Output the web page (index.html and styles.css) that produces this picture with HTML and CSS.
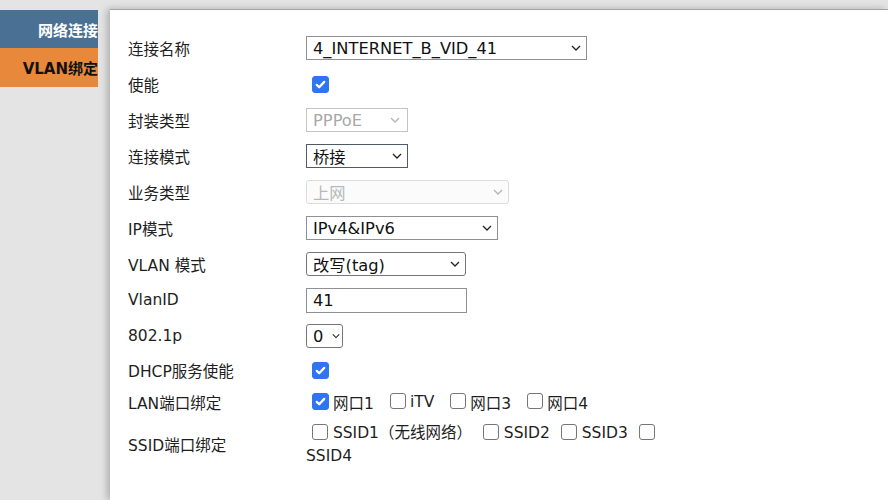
FILE: index.html
```html
<!DOCTYPE html>
<html lang="zh-CN">
<head>
<meta charset="utf-8">
<title>VLAN绑定</title>
<link rel="stylesheet" href="styles.css">
</head>
<body>
<div class="page">
  <nav class="side">
    <div class="side-item net">网络连接</div>
    <div class="side-item vlan">VLAN绑定</div>
  </nav>
  <main class="panel">
    <div class="form">
      <div class="row">
        <div class="lbl">连接名称</div>
        <div class="val"><div class="sel w-name">4_INTERNET_B_VID_41<svg class="chev" viewBox="0 0 10 6"><path d="M1 1l4 4 4-4"/></svg></div></div>
      </div>
      <div class="row">
        <div class="lbl">使能</div>
        <div class="val"><span class="cb on"><svg viewBox="0 0 16 16"><path d="M4 8.4l2.6 2.6L12 5.2"/></svg></span></div>
      </div>
      <div class="row">
        <div class="lbl">封装类型</div>
        <div class="val"><div class="sel dis w-short">PPPoE<svg class="chev" viewBox="0 0 10 6"><path d="M1 1l4 4 4-4"/></svg></div></div>
      </div>
      <div class="row">
        <div class="lbl">连接模式</div>
        <div class="val"><div class="sel dark w-short">桥接<svg class="chev" viewBox="0 0 10 6"><path d="M1 1l4 4 4-4"/></svg></div></div>
      </div>
      <div class="row">
        <div class="lbl">业务类型</div>
        <div class="val"><div class="sel dis2 w-svc">上网<svg class="chev" viewBox="0 0 10 6"><path d="M1 1l4 4 4-4"/></svg></div></div>
      </div>
      <div class="row">
        <div class="lbl">IP模式</div>
        <div class="val"><div class="sel w-ip">IPv4&amp;IPv6<svg class="chev" viewBox="0 0 10 6"><path d="M1 1l4 4 4-4"/></svg></div></div>
      </div>
      <div class="row">
        <div class="lbl">VLAN 模式</div>
        <div class="val"><div class="sel round w-mode">改写(tag)<svg class="chev" viewBox="0 0 10 6"><path d="M1 1l4 4 4-4"/></svg></div></div>
      </div>
      <div class="row">
        <div class="lbl">VlanID</div>
        <div class="val"><div class="txt">41</div></div>
      </div>
      <div class="row">
        <div class="lbl">802.1p</div>
        <div class="val"><div class="sel round w-pri">0<svg class="chev" viewBox="0 0 10 6"><path d="M1 1l4 4 4-4"/></svg></div></div>
      </div>
      <div class="row short">
        <div class="lbl">DHCP服务使能</div>
        <div class="val"><span class="cb on"><svg viewBox="0 0 16 16"><path d="M4 8.4l2.6 2.6L12 5.2"/></svg></span></div>
      </div>
      <div class="row short">
        <div class="lbl">LAN端口绑定</div>
        <div class="val lan">
          <span class="opt"><span class="cb on"><svg viewBox="0 0 16 16"><path d="M4 8.4l2.6 2.6L12 5.2"/></svg></span>网口1</span>
          <span class="opt"><span class="cb"></span>iTV</span>
          <span class="opt"><span class="cb"></span>网口3</span>
          <span class="opt"><span class="cb"></span>网口4</span>
        </div>
      </div>
      <div class="row tall">
        <div class="lbl">SSID端口绑定</div>
        <div class="val ssid"><span class="cb"></span> SSID1（无线网络） <span class="cb"></span> SSID2 <span class="cb"></span> SSID3 <span class="cb"></span> SSID4</div>
      </div>
    </div>
  </main>
</div>
</body>
</html>
```
FILE: styles.css
```css
html, body {
  margin: 0;
  padding: 0;
}
body {
  background: #e4e4e4;
  font-family: "DejaVu Sans", "Noto Sans CJK SC", sans-serif;
  color: #222;
  overflow: hidden;
}
.page {
  display: flex;
  height: 500px;
}
.side {
  width: 98px;
  flex: none;
  margin-top: 10px;
}
.side-item {
  display: flex;
  align-items: center;
  justify-content: flex-end;
  font-weight: bold;
  font-size: 15px;
  white-space: nowrap;
  overflow: hidden;
}
.side-item.net {
  height: 38px;
  background: #4a7194;
  color: #fff;
}
.side-item.vlan {
  height: 39px;
  background: #e8883a;
  color: #111;
}
.panel {
  flex: 1;
  margin-left: 12px;
  margin-top: 9px;
  background: #fff;
  border-top: 1px solid #a4a4a4;
  box-shadow: -3px 0 7px rgba(0, 0, 0, 0.24);
}
.form {
  padding: 20px 0 0 18px;
}
.row {
  display: flex;
  align-items: center;
  height: 36px;
}
.row.short {
  height: 32px;
}
.row.tall {
  height: 52px;
}
.lbl {
  width: 178px;
  flex: none;
  font-size: 15.5px;
  color: #1e1e1e;
  white-space: nowrap;
}
.val {
  display: flex;
  align-items: center;
  font-size: 15.5px;
  color: #1e1e1e;
}
.sel {
  box-sizing: border-box;
  height: 24px;
  display: flex;
  align-items: center;
  justify-content: space-between;
  padding: 0 5px 0 6px;
  border: 1px solid #8d9094;
  background: #fff;
  font-size: 16.3px;
  color: #111;
  white-space: nowrap;
}
.sel.dark {
  border-color: #4e5a66;
}
.sel.round {
  border-radius: 3px;
  border-color: #767676;
}
.sel.dis {
  border-color: #c4c4c4;
  color: #a8a8a8;
  padding-right: 7px;
}
.sel.dis2 {
  border-color: #dcdcdc;
  border-radius: 3px;
  color: #b8b8b8;
  background: #fbfbfb;
}
.chev {
  width: 10px;
  height: 6px;
  flex: none;
}
.chev path {
  fill: none;
  stroke: #222;
  stroke-width: 1.3;
}
.dis .chev path,
.dis2 .chev path {
  stroke: #b4b4b4;
}
.w-name { width: 281px; }
.w-short { width: 102px; }
.w-svc { width: 203px; }
.w-ip { width: 192px; }
.w-mode { width: 160px; }
.w-pri { width: 37px; padding: 0 2px 0 6px; }
.w-pri .chev { width: 8px; }
.txt {
  box-sizing: border-box;
  width: 161px;
  height: 25px;
  border: 1px solid #8d9094;
  padding: 0 6px;
  display: flex;
  align-items: center;
  font-size: 16.3px;
  color: #111;
}
.cb {
  box-sizing: border-box;
  display: inline-block;
  width: 16px;
  height: 16px;
  margin-left: 6px;
  border: 1px solid #767676;
  border-radius: 3px;
  background: #fff;
  vertical-align: -2px;
}
.cb.on {
  width: 17px;
  height: 17px;
  background: #2f74f0;
  border-color: #2f74f0;
}
.cb svg {
  display: block;
  width: 15px;
  height: 15px;
}
.cb svg path {
  fill: none;
  stroke: #fff;
  stroke-width: 2.4;
  stroke-linecap: round;
  stroke-linejoin: round;
}
.lan {
  gap: 10px;
}
.opt {
  display: flex;
  align-items: center;
  gap: 4px;
  white-space: nowrap;
}
.opt .cb {
  margin-top: -2px;
}
.ssid {
  display: block;
  width: 370px;
  line-height: 23px;
  margin-top: 2px;
}
```
